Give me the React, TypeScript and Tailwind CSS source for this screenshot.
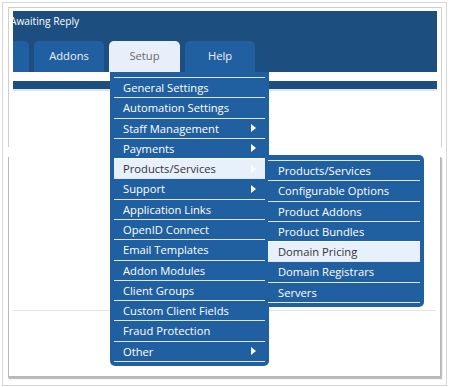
import React from "react";

type Item = { label: string; arrow: boolean; active?: boolean };

const mainItems: Item[] = [
  { label: "General Settings", arrow: false },
  { label: "Automation Settings", arrow: false },
  { label: "Staff Management", arrow: true },
  { label: "Payments", arrow: true },
  { label: "Products/Services", arrow: true, active: true },
  { label: "Support", arrow: true },
  { label: "Application Links", arrow: false },
  { label: "OpenID Connect", arrow: false },
  { label: "Email Templates", arrow: false },
  { label: "Addon Modules", arrow: false },
  { label: "Client Groups", arrow: false },
  { label: "Custom Client Fields", arrow: false },
  { label: "Fraud Protection", arrow: false },
  { label: "Other", arrow: true },
];

const subItems: Item[] = [
  { label: "Products/Services", arrow: false },
  { label: "Configurable Options", arrow: false },
  { label: "Product Addons", arrow: false },
  { label: "Product Bundles", arrow: false },
  { label: "Domain Pricing", arrow: false, active: true },
  { label: "Domain Registrars", arrow: false },
  { label: "Servers", arrow: false },
];

function Arrow() {
  return (
    <svg width="5" height="8" viewBox="0 0 5 8" className="shrink-0">
      <polygon points="0,0 5,4 0,8" fill="#ffffff" />
    </svg>
  );
}

function MenuRow({ item, sub }: { item: Item; sub?: boolean }) {
  return (
    <div
      className={
        item.active
          ? "h-[20.29px] border-t border-white/85 bg-[#e8f0fb] text-[#333333] flex items-center justify-between " +
            (sub ? "pl-[10px] pr-[9px]" : "pl-[9px] pr-[9px]")
          : "h-[20.29px] border-t border-white/85 text-white flex items-center justify-between " +
            (sub ? "pl-[10px] pr-[9px]" : "pl-[9px] pr-[9px]")
      }
    >
      <span className="text-[11.2px] leading-none whitespace-nowrap">{item.label}</span>
      {item.arrow ? <Arrow /> : null}
    </div>
  );
}

export default function App() {
  return (
    <div className="relative w-[449px] h-[387px] bg-white overflow-hidden pl-[2px] pt-[2px] font-['Open_Sans',sans-serif]">
      {/* outer frame */}
      <div className="w-[445px] h-[384px] border border-[#d6d6d6] pl-[5px] pt-[4px]">
        {/* top panel */}
        <div className="w-[434px] h-[140px] border-l border-t border-r border-[#cfcfcf] pl-[4px] pr-[4px] pt-[3px]">
          <div className="h-[61px] bg-[#1c4f80] overflow-hidden flex flex-col">
            <div className="h-[30px] pt-[4px] -ml-[3px] text-white text-[10.2px] leading-[13px] whitespace-nowrap">
              Awaiting Reply
            </div>
            <div className="h-[31px] flex gap-[5px] -ml-[54px] items-end">
              <div className="w-[70px] h-[31px] shrink-0 rounded-t-[5px] bg-[#2160a0]" />
              <div className="w-[70px] h-[31px] shrink-0 rounded-t-[5px] bg-[#2160a0] flex items-center justify-center text-[11.2px] text-[#eef2f7]">
                Addons
              </div>
              <div className="w-[71px] h-[31px] shrink-0 rounded-t-[5px] bg-[#e8effa] flex items-center justify-center text-[11.2px] text-[#6b6b6b]">
                Setup
              </div>
              <div className="w-[70px] h-[31px] shrink-0 rounded-t-[5px] bg-[#2160a0] flex items-center justify-center text-[11.2px] text-[#eef2f7]">
                Help
              </div>
            </div>
          </div>
          <div className="h-[9px]" />
          <div className="h-[8px] bg-[#1c4f80]" />
          <div className="h-[2px] bg-[#dfe5ec]" />
        </div>
        {/* gap */}
        <div className="h-[10px]" />
        {/* bottom panel */}
        <div className="w-[433px] h-[221px] border-l border-r border-b-2 border-[#b8b8b8] shadow-[1px_1px_1px_rgba(0,0,0,0.25)] pl-[4px] pr-[4px]">
          <div className="h-[153px]" />
          <div className="h-px bg-[#e4e4e4]" />
        </div>
      </div>

      {/* main dropdown */}
      <div className="absolute left-[110px] top-[72px] w-[159px] bg-[#2160a0] rounded-b-[5px] pt-[5px] pb-[4px] px-[4px]">
        {mainItems.map((it) => (
          <MenuRow key={it.label} item={it} />
        ))}
        <div className="border-t border-white/85" />
      </div>

      {/* sub dropdown */}
      <div className="absolute left-[268px] top-[155px] w-[156px] bg-[#2160a0] rounded-r-[5px] pt-[5px] pb-[4px] pr-[4px]">
        {subItems.map((it) => (
          <MenuRow key={it.label} item={it} sub />
        ))}
        <div className="border-t border-white/85" />
      </div>
    </div>
  );
}
